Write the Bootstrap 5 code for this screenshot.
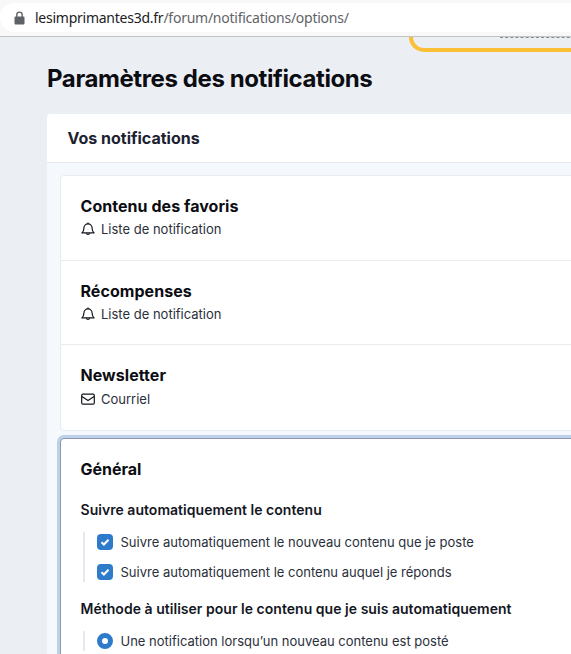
<!DOCTYPE html>
<html lang="fr">
<head>
    <meta charset="UTF-8">
    <meta name="viewport" content="width=device-width, initial-scale=1.0">
    <title>Paramètres des notifications</title>
    <link href="https://cdn.jsdelivr.net/npm/bootstrap@5.3.0/dist/css/bootstrap.min.css" rel="stylesheet">
    <style>
        html, body { height: 100%; overflow: hidden; }
        body { background: #ebeef3; font-family: Inter, "Liberation Sans", sans-serif; color: #14171f; }
        .url-strip { height: 37px; background: #f8f8f8; border-bottom: 1px solid #c4c4c4; padding-top: 3px; }
        .url-pill { height: 29px; width: 900px; background: #fff; border-radius: 15px; padding-left: 14px; gap: 10px; font-family: "Noto Sans", "Open Sans", sans-serif; font-size: 14px; letter-spacing: -0.25px; color: #202124; }
        .url-rest { color: #5f6368; }
        .banner-bit { height: 15px; margin-left: 409px; width: 400px; border: solid #fbbf36; border-width: 0 0 4px 4px; border-bottom-left-radius: 16px; }
        .banner-cut { margin-left: 87px; width: 80px; border-top: 1px dashed #8a8a8a; }
        .page-wrap { width: 900px; margin-left: 47px; }
        .page-title { font-size: 24px; font-weight: 700; line-height: 30px; margin: 12px 0 20px; color: #0b0d12; letter-spacing: -0.4px; }
        .notif-panel { border: 0; border-radius: 4px; overflow: hidden; --bs-card-bg: #f5f8fc; }
        .notif-head { height: 49px; background: #fff; border-bottom: 1px solid #e6e9ef; padding: 0 20.5px; font-size: 16px; font-weight: 700; line-height: 48px; color: #1b2130; }
        .notif-body { padding: 12px 13px; }
        .pref-list { border: 1px solid #e8ebf0; border-radius: 4px; background: #fff; }
        .pref-row { padding: 19px 20px 0 19.5px; border-bottom: 1px solid #e8ebf0; height: 85px; }
        .pref-row:nth-child(2) { height: 84px; }
        .pref-row:last-child { border-bottom: 0; height: 85px; }
        .pref-name { font-size: 16px; font-weight: 700; line-height: 22px; color: #0b0d12; letter-spacing: 0.05px; }
        .pref-kind { font-size: 13px; line-height: 20px; margin-top: 2px; gap: 6px; color: #2a2f3a; }
        .pref-row:last-child .pref-kind { margin-top: 3px; }
        .pref-kind svg { width: 14px; height: 14px; flex: none; margin-left: 0.5px; }
        .pref-open { margin-top: 7px; background: #fff; border: 1px solid #8b99b3; border-radius: 4px; box-shadow: 0 0 0 3px #bcd0e8; padding: 19px 20px 19px 19.5px; height: 400px; }
        .open-title { font-size: 16px; font-weight: 700; line-height: 22px; color: #0b0d12; margin-bottom: 20px; }
        .group-title { font-size: 14px; font-weight: 600; line-height: 20px; color: #14171f; margin-bottom: 12px; letter-spacing: 0.03px; }
        .group-title + .opt-group + .group-title { padding-top: 1px; }
        .opt-group { border-left: 2px solid #e7e8ef; margin: 0 0 16px 2px; padding-left: 12px; }
        .opt-line { gap: 8px; font-size: 13px; line-height: 20px; color: #2a2f3a; height: 20px; margin-bottom: 10px; }
        .opt-line:last-child { margin-bottom: 0; }
        .tick-box { width: 16px; height: 16px; border-radius: 4px; background: #2f7bcb; flex: none; }
        .dot-box { width: 16px; height: 16px; border-radius: 50%; border: 5px solid #2f7bcb; background: #fff; flex: none; }
    </style>
</head>
<body>
    <!-- Barre d'adresse -->
    <div class="url-strip">
        <div class="url-pill d-flex align-items-center">
            <svg width="11" height="14" viewBox="0 0 11 14"><path fill="#5f6368" d="M1.5 5.5h8a1 1 0 0 1 1 1v6a1 1 0 0 1-1 1h-8a1 1 0 0 1-1-1v-6a1 1 0 0 1 1-1z"/><path fill="none" stroke="#5f6368" stroke-width="1.4" d="M2.8 6V3.8a2.7 2.7 0 0 1 5.4 0V6"/></svg>
            <span>lesimprimantes3d.fr<span class="url-rest">/forum/notifications/options/</span></span>
        </div>
    </div>

    <div class="banner-bit"><div class="banner-cut"></div></div>

    <main class="page-wrap">
        <h1 class="page-title">Paramètres des notifications</h1>

        <div class="card notif-panel">
            <div class="notif-head">Vos notifications</div>
            <div class="notif-body">
                <div class="pref-list">
                    <div class="pref-row">
                        <div class="pref-name">Contenu des favoris</div>
                        <div class="pref-kind d-flex align-items-center">
                            <svg viewBox="0 0 14 14" fill="none" stroke="#14171f" stroke-width="1.2" stroke-linejoin="round"><path d="M.9 10.9c1.2-1 2-2 2-4.9a4.1 4.1 0 0 1 8.2 0c0 2.9.8 3.9 2 4.9z"/><path d="M5.3 11.1a1.75 1.75 0 0 0 3.4 0"/><path d="M7 .6v1.3"/></svg>
                            <span>Liste de notification</span>
                        </div>
                    </div>
                    <div class="pref-row">
                        <div class="pref-name">Récompenses</div>
                        <div class="pref-kind d-flex align-items-center">
                            <svg viewBox="0 0 14 14" fill="none" stroke="#14171f" stroke-width="1.2" stroke-linejoin="round"><path d="M.9 10.9c1.2-1 2-2 2-4.9a4.1 4.1 0 0 1 8.2 0c0 2.9.8 3.9 2 4.9z"/><path d="M5.3 11.1a1.75 1.75 0 0 0 3.4 0"/><path d="M7 .6v1.3"/></svg>
                            <span>Liste de notification</span>
                        </div>
                    </div>
                    <div class="pref-row">
                        <div class="pref-name">Newsletter</div>
                        <div class="pref-kind d-flex align-items-center">
                            <svg viewBox="0 0 14 14" fill="none" stroke="#14171f" stroke-width="1.2" stroke-linejoin="round"><rect x=".7" y="2.2" width="12.6" height="10" rx="1.2"/><path d="M.9 4.4L7 8.6l6.1-4.2"/></svg>
                            <span>Courriel</span>
                        </div>
                    </div>
                </div>

                <div class="pref-open">
                    <div class="open-title">Général</div>

                    <div class="group-title">Suivre automatiquement le contenu</div>
                    <div class="opt-group">
                        <div class="opt-line d-flex align-items-center">
                            <span class="tick-box d-flex align-items-center justify-content-center"><svg width="10" height="10" viewBox="0 0 10 10"><path fill="none" stroke="#fff" stroke-width="2" d="M1.5 5.2l2.4 2.3 4.6-4.8"/></svg></span>
                            <span>Suivre automatiquement le nouveau contenu que je poste</span>
                        </div>
                        <div class="opt-line d-flex align-items-center">
                            <span class="tick-box d-flex align-items-center justify-content-center"><svg width="10" height="10" viewBox="0 0 10 10"><path fill="none" stroke="#fff" stroke-width="2" d="M1.5 5.2l2.4 2.3 4.6-4.8"/></svg></span>
                            <span>Suivre automatiquement le contenu auquel je réponds</span>
                        </div>
                    </div>

                    <div class="group-title">Méthode à utiliser pour le contenu que je suis automatiquement</div>
                    <div class="opt-group">
                        <div class="opt-line d-flex align-items-center">
                            <span class="dot-box"></span>
                            <span>Une notification lorsqu’un nouveau contenu est posté</span>
                        </div>
                    </div>
                </div>
            </div>
        </div>
    </main>

    <script src="https://cdn.jsdelivr.net/npm/bootstrap@5.3.0/dist/js/bootstrap.bundle.min.js"></script>
</body>
</html>
